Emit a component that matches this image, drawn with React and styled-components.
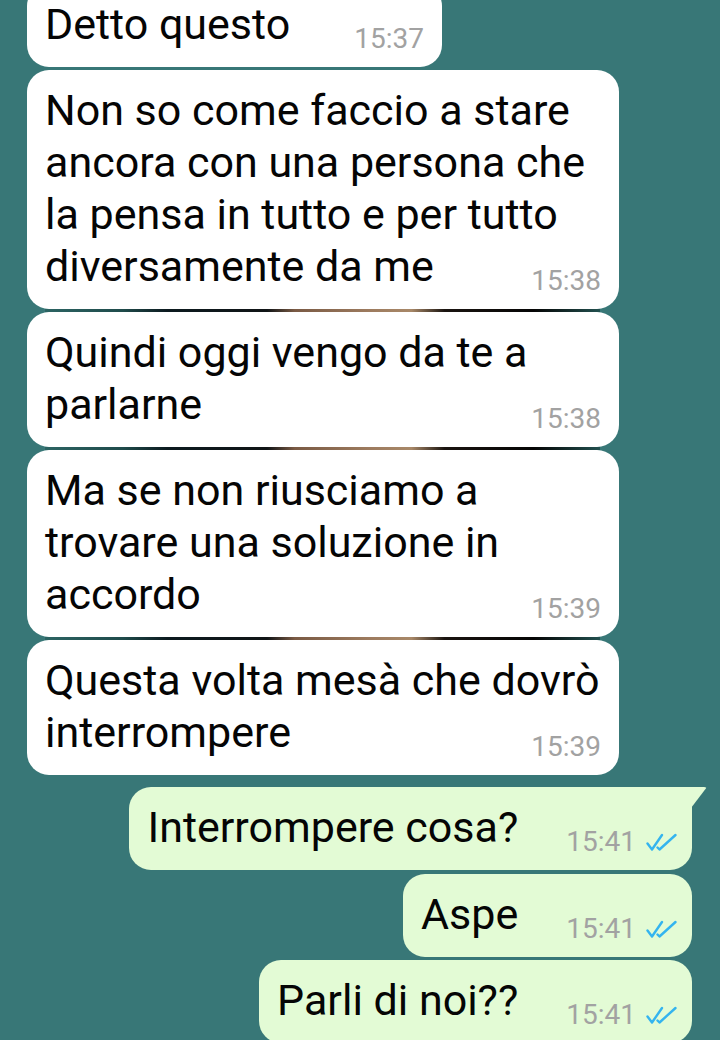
import React from "react";
import styled, { createGlobalStyle, css } from "styled-components";

const Global = createGlobalStyle`
  html, body { margin: 0; padding: 0; }
  body { background: #387777; font-family: Roboto, "Noto Sans", "Liberation Sans", sans-serif; }
`;

const Screen = styled.div`
  width: 720px;
  height: 1040px;
  overflow: hidden;
  background: #387777;
`;

const Thread = styled.div`
  display: flex;
  flex-direction: column;
  margin-top: -16px;
  padding: 0 28px 0 27px;
`;

const Seam = styled.div`
  flex: none;
  height: ${(p) => p.$h || 3}px;
  ${(p) =>
    p.$photo &&
    css`
      align-self: flex-start;
      width: 555px;
      margin-left: 18px;
      background: linear-gradient(
        90deg,
        #2c6463 0%,
        #1f4b4b 14%,
        #0c1a1f 22%,
        #101416 40%,
        #7a5a44 45%,
        #9c7a5e 58%,
        #a88868 66%,
        #1a1410 72%,
        #050505 88%,
        #22504f 100%
      );
    `}
`;

const Bubble = styled.div`
  position: relative;
  display: flow-root;
  box-sizing: border-box;
  max-width: 592px;
  border-radius: 22px;
  font-size: 43px;
  line-height: 52px;
  color: #050505;
  ${(p) =>
    p.$out
      ? css`
          align-self: flex-end;
          background: #e3fbd5;
          padding: 14px 15px 10px 18px;
        `
      : css`
          align-self: flex-start;
          background: #ffffff;
          padding: 14px 18px 10px 18px;
        `}
  ${(p) =>
    p.$tail &&
    css`
      border-top-right-radius: 0;
      &::after {
        content: "";
        position: absolute;
        top: 0;
        right: -15px;
        width: 16px;
        height: 21px;
        background: #e3fbd5;
        border-top-right-radius: 3px;
        clip-path: polygon(0 0, 100% 0, 0 100%);
      }
    `}
`;

const Meta = styled.span`
  float: right;
  display: flex;
  align-items: center;
  gap: 10px;
  margin-top: 23px;
  margin-left: ${(p) => (p.$out ? 48 : 64)}px;
  height: 36px;
  font-size: 28px;
  line-height: 36px;
  color: #a2a2a2;
`;

const Ticks = () => (
  <svg width="31" height="19" viewBox="0 0 31 19" fill="none" stroke="#34b4ef" strokeWidth="2.4" strokeLinecap="round" strokeLinejoin="round">
    <path d="M1.5 10.5 L6 16.5 L16 2" />
    <path d="M11.5 14.5 L13.5 16.5 L29.5 2" />
  </svg>
);

const Message = ({ out, tail, text, time }) => (
  <Bubble $out={out} $tail={tail}>
    {text}
    <Meta $out={out}>
      <span>{time}</span>
      {out && <Ticks />}
    </Meta>
  </Bubble>
);

export default function App() {
  return (
    <Screen>
      <Global />
      <Thread>
        <Message text="Detto questo" time="15:37" />
        <Seam />
        <Message
          text="Non so come faccio a stare ancora con una persona che la pensa in tutto e per tutto diversamente da me"
          time="15:38"
        />
        <Seam $photo />
        <Message text="Quindi oggi vengo da te a parlarne" time="15:38" />
        <Seam $photo />
        <Message text="Ma se non riusciamo a trovare una soluzione in accordo" time="15:39" />
        <Seam $photo />
        <Message text="Questa volta mesà che dovrò interrompere" time="15:39" />
        <Seam $h={12} />
        <Message out tail text="Interrompere cosa?" time="15:41" />
        <Seam $h={4} />
        <Message out text="Aspe" time="15:41" />
        <Seam />
        <Message out text="Parli di noi??" time="15:41" />
      </Thread>
    </Screen>
  );
}
